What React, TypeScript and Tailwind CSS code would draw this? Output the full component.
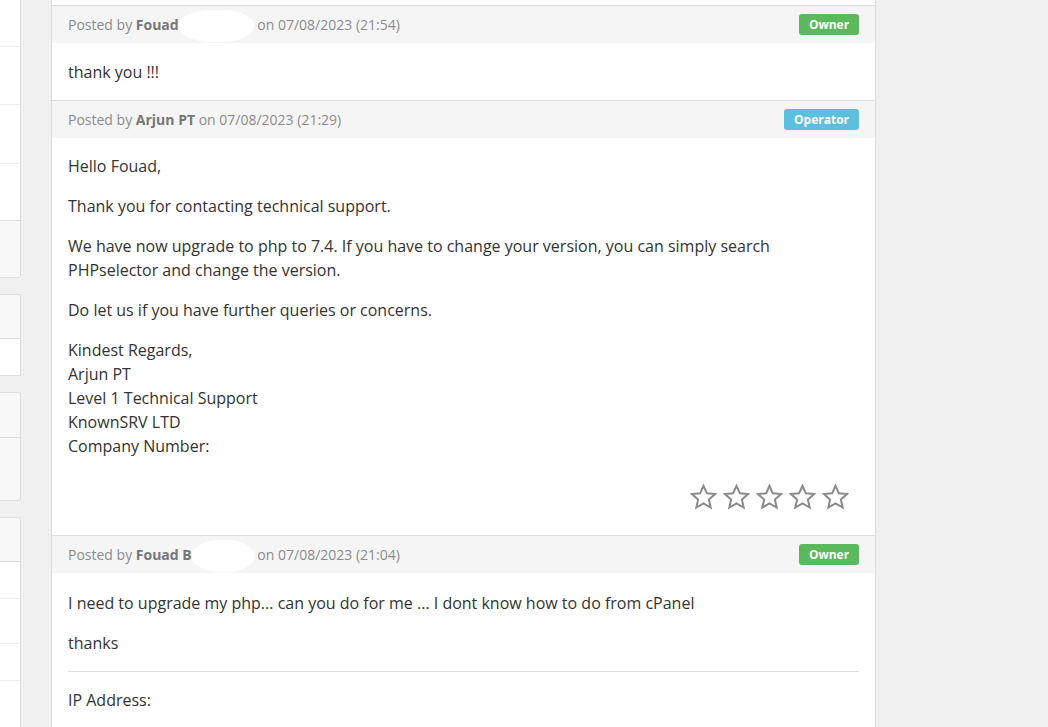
import React from "react";

function StarO() {
  return (
    <svg width="27" height="26" viewBox="0 0 27 26" fill="none">
      <polygon
        points="13.5,1.8 16.9,9.3 25,10.1 18.9,15.6 20.7,23.6 13.5,19.4 6.3,23.6 8.1,15.6 2,10.1 10.1,9.3"
        stroke="#8a8a8a"
        strokeWidth="2"
        strokeLinejoin="miter"
        fill="none"
      />
    </svg>
  );
}

function Badge({ kind }: { kind: "Owner" | "Operator" }) {
  return (
    <span
      className={
        "inline-flex h-[21px] items-center justify-center rounded-[3px] text-[12px] font-bold leading-none text-white " +
        (kind === "Owner" ? "w-[60px] bg-[#5cb85c]" : "w-[75px] bg-[#5bc0de]")
      }
    >
      {kind}
    </span>
  );
}

function Blob({ w }: { w: number }) {
  return (
    <span className="relative inline-block align-middle" style={{ width: w }}>
      <span className="absolute left-0 top-[-16px] h-[32px] w-full rounded-[45%] bg-white" />
    </span>
  );
}

function Header({
  name,
  blob,
  date,
  badge,
}: {
  name: string;
  blob?: number;
  date: string;
  badge: "Owner" | "Operator";
}) {
  return (
    <div className="flex h-[38px] items-center justify-between border-t border-[#dddddd] bg-[#f5f5f5] px-4">
      <div className="text-[14px] text-[#8c8c8c]">
        Posted by <span className="font-bold text-[#777]">{name}</span>
        {blob ? <Blob w={blob} /> : null} on {date}
      </div>
      <Badge kind={badge} />
    </div>
  );
}

export default function App() {
  return (
    <div className="flex h-[727px] w-[1048px] overflow-hidden bg-[#f0f0f0] font-['Open_Sans',sans-serif]">
      {/* left sidebar (cut off) */}
      <aside className="flex w-[21px] shrink-0 flex-col">
        <div className="h-[278px] rounded-br-[3px] border-b border-r border-[#dddddd] bg-white">
          <div className="h-[47px] border-b border-[#eeeeee]" />
          <div className="h-[58px] border-b border-[#eeeeee]" />
          <div className="h-[59px] border-b border-[#eeeeee]" />
          <div className="h-[57px] border-b border-[#dddddd]" />
          <div className="h-[55px] rounded-br-[3px] bg-[#f8f8f8]" />
        </div>
        <div className="mt-[16px] h-[82px] rounded-tr-[3px] border-r border-t border-b border-[#dddddd] bg-white">
          <div className="h-[44px] rounded-tr-[3px] border-b border-[#dddddd] bg-[#f8f8f8]" />
        </div>
        <div className="mt-[16px] h-[109px] rounded-r-[3px] border border-l-0 border-[#dddddd] bg-[#f8f8f8]">
          <div className="h-[45px] border-b border-[#dddddd]" />
        </div>
        <div className="mt-[16px] flex-1 rounded-tr-[3px] border-r border-t border-[#dddddd] bg-white">
          <div className="h-[44px] rounded-tr-[3px] border-b border-[#dddddd] bg-[#f8f8f8]" />
          <div className="h-[37px] border-b border-[#eeeeee]" />
          <div className="h-[45px] border-b border-[#eeeeee]" />
          <div className="h-[37px] border-b border-[#eeeeee]" />
        </div>
      </aside>

      <main className="ml-[30px] w-[825px] shrink-0 border-x border-[#dddddd] bg-white text-[16px] leading-6 text-[#333]">
        <div className="h-[5px]" />

        <Header name="Fouad" blob={75} date="07/08/2023 (21:54)" badge="Owner" />
        <div className="h-[57px] px-4 pt-[17px]">
          <p>thank you !!!</p>
        </div>

        <Header name="Arjun PT" date="07/08/2023 (21:29)" badge="Operator" />
        <div className="px-4 pb-[25px] pt-[16px]">
          <p className="mb-4">Hello Fouad,</p>
          <p className="mb-4">Thank you for contacting technical support.</p>
          <p className="mb-4">
            We have now upgrade to php to 7.4. If you have to change your version, you can simply search
            <br />
            PHPselector and change the version.
          </p>
          <p className="mb-4">Do let us if you have further queries or concerns.</p>
          <p>
            Kindest Regards,
            <br />
            Arjun PT
            <br />
            Level 1 Technical Support
            <br />
            KnownSRV LTD
            <br />
            Company Number:
          </p>
          <div className="mt-[26px] flex justify-end gap-[6px] pr-[10px]">
            <StarO />
            <StarO />
            <StarO />
            <StarO />
            <StarO />
          </div>
        </div>

        <Header name="Fouad B" blob={62} date="07/08/2023 (21:04)" badge="Owner" />
        <div className="px-4 pt-[18px]">
          <p className="mb-4">I need to upgrade my php... can you do for me ... I dont know how to do from cPanel</p>
          <p className="mb-4">thanks</p>
          <hr className="border-t border-[#dddddd]" />
          <p className="mt-4">IP Address:</p>
        </div>
      </main>
    </div>
  );
}
